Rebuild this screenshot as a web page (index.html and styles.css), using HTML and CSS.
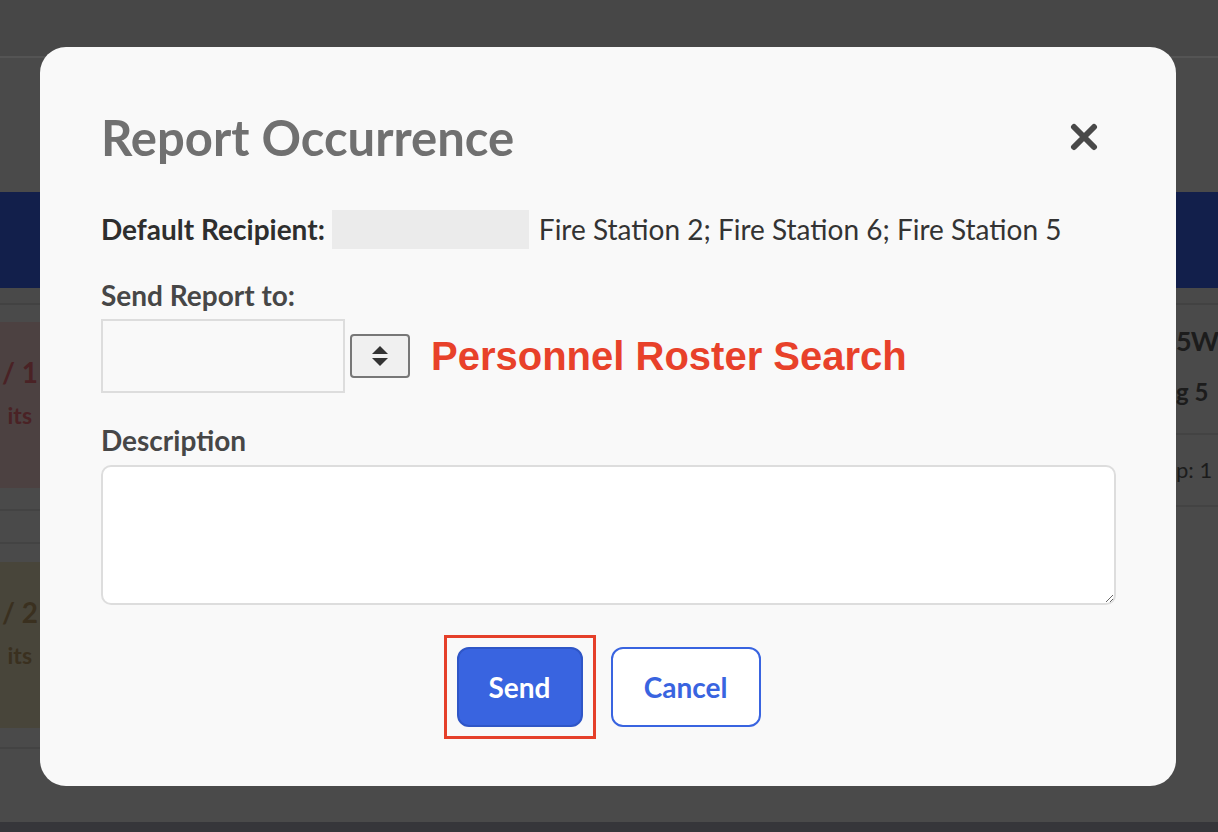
FILE: index.html
```html
<!DOCTYPE html>
<html lang="en">
<head>
  <meta charset="UTF-8" />
  <meta name="viewport" content="width=device-width, initial-scale=1.0" />
  <title>Report Occurrence</title>
  <link rel="stylesheet" href="styles.css">
</head>
<body>
  <!-- dashboard behind the dialog -->
  <div class="page">
    <div class="topbar"></div>
    <div class="subbar"></div>
    <div class="band"></div>
    <div class="board">
      <div class="col-left">
        <div class="unit-card red">
          <span class="count">/ 1</span>
          <span class="units">its</span>
        </div>
        <div class="divider-row"></div>
        <div class="unit-card amber">
          <span class="count">/ 2</span>
          <span class="units">its</span>
        </div>
        <div class="row-end"></div>
      </div>
      <div class="col-right">
        <div class="station">
          <div class="st-name">5W</div>
          <div class="st-sub">g 5</div>
        </div>
        <div class="st-meta">p: 1</div>
      </div>
    </div>
    <div class="footer-strip"></div>
  </div>

  <div class="overlay">
    <div class="modal">
      <div class="modal-head">
        <h2 class="modal-title">Report Occurrence</h2>
        <button class="close-btn" type="button" aria-label="Close">
          <svg width="28" height="28" viewBox="0 0 28 28">
            <path d="M4 4 L24 24 M24 4 L4 24" stroke="#494949" stroke-width="6" stroke-linecap="round" fill="none"/>
          </svg>
        </button>
      </div>

      <div class="recipient">
        <span class="label">Default Recipient:</span>
        <span class="redacted"></span>
        <span class="stations">Fire Station 2; Fire Station 6; Fire Station 5</span>
      </div>

      <label class="field-label" for="sendto">Send Report to:</label>
      <div class="sendto-row">
        <input type="text" id="sendto" class="sendto-input" />
        <button class="spin-btn" type="button">
          <svg width="20" height="24" viewBox="0 0 20 24">
            <path d="M10 2 L18 10 H2 Z M2 14 H18 L10 22 Z" fill="#333"/>
          </svg>
        </button>
        <span class="roster-note">Personnel Roster Search</span>
      </div>

      <label class="field-label desc-label" for="desc">Description</label>
      <textarea id="desc" class="desc"></textarea>

      <div class="actions">
        <span class="send-mark">
          <button class="btn btn-send" type="button">Send</button>
        </span>
        <button class="btn btn-cancel" type="button">Cancel</button>
      </div>
    </div>
  </div>
</body>
</html>
```

FILE: styles.css
```css
body {
  margin: 0;
  background: #4a4a4a;
  font-family: 'Lato', 'Open Sans', sans-serif;
  overflow: hidden;
  width: 1218px;
  height: 832px;
}

/* dimmed dashboard */
.page {
  height: 832px;
  display: flex;
  flex-direction: column;
}
.topbar {
  height: 56px;
  background: #474747;
  border-bottom: 2px solid #545454;
}
.subbar {
  height: 134px;
  background: #4a4a4a;
}
.band {
  height: 96px;
  background: #121f4b;
}
.board {
  flex: 1;
  display: flex;
  justify-content: space-between;
  border-top: 15px solid #494949;
}
.col-left {
  width: 40px;
  overflow: hidden;
  border-top: 2px solid #424242;
  display: flex;
  flex-direction: column;
}
.unit-card {
  margin-top: 17px;
  height: 166px;
  display: flex;
  flex-direction: column;
  align-items: flex-end;
  padding-right: 2px;
  font-weight: 700;
  white-space: nowrap;
}
.unit-card.red {
  background: #4c4141;
  color: #4a2225;
}
.unit-card.amber {
  margin-top: 18px;
  background: #48453a;
  color: #3a301f;
}
.count {
  font-size: 28px;
  margin-top: 33px;
}
.units {
  font-size: 23px;
  margin-top: 12px;
  margin-right: 6px;
}
.divider-row {
  margin-top: 21px;
  height: 31px;
  border-top: 2px solid #434343;
  border-bottom: 2px solid #434343;
}
.row-end {
  margin-top: 19px;
  border-top: 2px solid #434343;
}
.col-right {
  width: 42px;
  overflow: hidden;
  white-space: nowrap;
  color: #1c1c1c;
  border-top: 2px solid #424242;
}
.station {
  height: 130px;
  padding-top: 16px;
  box-sizing: border-box;
  border-bottom: 2px solid #434343;
}
.st-name {
  font-size: 27px;
  font-weight: 700;
  line-height: 40px;
  letter-spacing: -1px;
}
.st-sub {
  font-size: 24px;
  font-weight: 700;
  margin-top: 16px;
  line-height: 30px;
}
.st-meta {
  height: 70px;
  line-height: 70px;
  font-size: 22px;
  border-bottom: 2px solid #434343;
}
.footer-strip {
  height: 10px;
  background: #36363a;
}

/* dialog */
.overlay {
  position: fixed;
  inset: 0;
  display: flex;
  align-items: flex-start;
  padding: 47px 0 0 40px;
}
.modal {
  width: 1136px;
  box-sizing: border-box;
  background: #f9f9f9;
  border-radius: 26px;
  padding: 62px 60px 59px 61px;
  display: flex;
  flex-direction: column;
}
.modal-head {
  height: 56px;
  display: flex;
  align-items: center;
  justify-content: space-between;
}
.modal-title {
  margin: 0;
  font-size: 49px;
  line-height: 56px;
  font-weight: 700;
  color: #707070;
}
.close-btn {
  background: none;
  border: none;
  padding: 0;
  margin-right: 18px;
  display: flex;
}
.recipient {
  margin-top: 44px;
  height: 40px;
  display: flex;
  align-items: center;
  font-size: 28px;
  color: #333;
}
.recipient .label {
  font-weight: 700;
  color: #2e2e2e;
}
.redacted {
  width: 197px;
  height: 39px;
  background: #ebebeb;
  margin: 0 10px 0 7px;
}
.field-label {
  margin-top: 28px;
  line-height: 36px;
  font-size: 28px;
  font-weight: 700;
  color: #474747;
}
.sendto-row {
  margin-top: 6px;
  display: flex;
  align-items: center;
}
.sendto-input {
  width: 244px;
  height: 74px;
  box-sizing: border-box;
  border: 2px solid #dddddd;
  background: #f9f9f9;
  margin: 0;
}
.spin-btn {
  width: 60px;
  height: 44px;
  margin-left: 5px;
  background: #f0f0f0;
  border: 2px solid #777;
  border-radius: 4px;
  display: flex;
  align-items: center;
  justify-content: center;
  padding: 0;
}
.roster-note {
  margin-left: 21px;
  font-family: 'Liberation Sans', Arial, sans-serif;
  font-weight: 700;
  font-size: 40px;
  color: #e8412a;
}
.desc-label {
  margin-top: 29px;
}
.desc {
  margin-top: 7px;
  height: 140px;
  box-sizing: border-box;
  border: 2px solid #dddddd;
  border-radius: 10px;
  background: #fff;
  resize: vertical;
}
.actions {
  margin-top: 42px;
  display: flex;
  justify-content: center;
  gap: 28px;
}
/* highlight frame drawn around the send button */
.send-mark {
  position: relative;
  display: flex;
}
.send-mark::after {
  content: "";
  position: absolute;
  inset: -12px -13px;
  border: 3px solid #e5402a;
  pointer-events: none;
}
.btn {
  height: 80px;
  border-radius: 12px;
  font-family: 'Lato', sans-serif;
  font-weight: 700;
  font-size: 28px;
}
.btn-send {
  width: 126px;
  background: #3964e0;
  border: 2px solid #2f56c7;
  color: #fff;
}
.btn-cancel {
  width: 150px;
  background: #fff;
  border: 2px solid #3964e0;
  color: #3964e0;
}
```
